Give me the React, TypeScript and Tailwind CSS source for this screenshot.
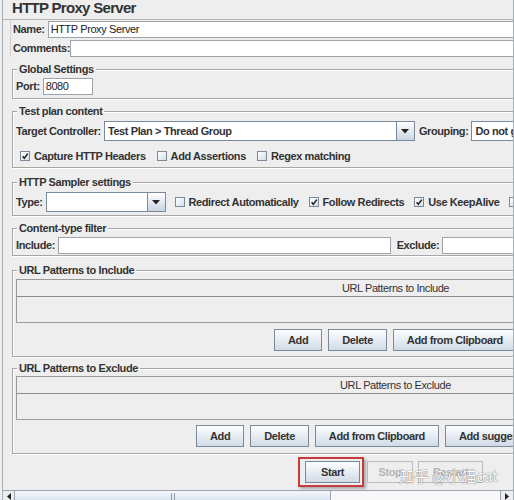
import React from "react";

const FONT = "font-['Liberation_Sans','Noto_Sans_CJK_SC',sans-serif]";

function Label({ children, className = "" }: { children: React.ReactNode; className?: string }) {
  return (
    <span className={`text-[11px] font-bold tracking-[-0.4px] leading-[13px] text-[#333333] whitespace-nowrap ${className}`}>
      {children}
    </span>
  );
}

function Field({ children, className = "" }: { children?: React.ReactNode; className?: string }) {
  return (
    <div
      className={`h-[17px] bg-white border border-[#9ea3a9] pl-[2px] text-[11px] tracking-[-0.4px] leading-[15px] text-[#222222] whitespace-nowrap overflow-hidden ${className}`}
    >
      {children}
    </div>
  );
}

function Combo({ text = "", className = "" }: { text?: string; className?: string }) {
  return (
    <div className={`flex h-[20px] border border-[#7a8a99] bg-white shrink-0 ${className}`}>
      <div className="flex-1 pl-[3px] text-[11px] font-bold tracking-[-0.4px] leading-[18px] text-[#333333] whitespace-nowrap overflow-hidden">
        {text}
      </div>
      <div className="w-[18px] h-full border-l border-[#7a8a99] bg-linear-to-b from-[#ffffff] to-[#c9d5e2] flex items-center justify-center">
        <svg width="8" height="5" viewBox="0 0 8 5">
          <path d="M0 0H8L4 4.5Z" fill="#222222" />
        </svg>
      </div>
    </div>
  );
}

function Check({ checked = false, label }: { checked?: boolean; label: string }) {
  return (
    <div className="flex items-center gap-[4px] shrink-0">
      <div className="w-[10px] h-[10px] border border-[#7a8a99] bg-linear-to-br from-[#ffffff] to-[#d3dde8] flex items-center justify-center">
        {checked && (
          <svg width="8" height="8" viewBox="0 0 8 8">
            <path d="M1.6 4.2L3.3 6.3L6.8 1.6" stroke="#222222" strokeWidth="1.5" fill="none" />
          </svg>
        )}
      </div>
      <Label>{label}</Label>
    </div>
  );
}

function Btn({ children, disabled = false, className = "" }: { children: React.ReactNode; disabled?: boolean; className?: string }) {
  const look = disabled
    ? "border-[#b9bec4] bg-[#eeeeee] text-[#b4b4b4]"
    : "border-[#7a8a99] bg-linear-to-b from-[#fdfeff] to-[#d0dbe7] text-[#333333]";
  return (
    <div
      className={`h-[22px] px-[13px] border ${look} text-[11px] font-bold tracking-[-0.4px] leading-[20px] flex items-center justify-center whitespace-nowrap shrink-0 ${className}`}
    >
      {children}
    </div>
  );
}

function Group({ title, className = "", children }: { title: string; className?: string; children: React.ReactNode }) {
  return (
    <div className={`mx-[9px] border border-[#a6a6a6] shadow-[inset_1px_1px_0_#ffffff,1px_1px_0_#ffffff] px-[3px] ${className}`}>
      <span className="-mt-[7px] ml-[1px] px-[2px] block w-fit bg-[#eeeeee] text-[11px] font-bold tracking-[-0.4px] leading-[13px] text-[#333333] whitespace-nowrap">
        {title}
      </span>
      {children}
    </div>
  );
}

function Table({ title, className = "" }: { title: string; className?: string }) {
  return (
    <div className={`border border-[#9a9a9a] bg-[#eeeeee] ${className}`}>
      <div className="h-[17px] border-b border-[#8c8c8c] text-center text-[11px] tracking-[-0.4px] leading-[16px] text-[#333333]">
        {title}
      </div>
      <div className="h-[25px]" />
    </div>
  );
}

export default function App() {
  return (
    <div className={`${FONT} relative w-[514px] h-[500px] bg-[#eeeeee] overflow-hidden`}>
      <div className="ml-[2px] w-[512px] h-[500px] border-x border-[#a9b0b8] flex flex-col">
        <div className="h-[490px] overflow-hidden">
          <div className="w-[785px]">
            {/* Title */}
            <div className="h-[20px] border-b border-[#b4b4b4] pl-[9px] text-[15px] font-bold tracking-[-0.7px] leading-[15px] text-[#333333]">
              HTTP Proxy Server
            </div>

            {/* Name / Comments */}
            <div className="ml-[7px] border-l border-[#d2d2d2] pl-[2px] pt-[1px]">
              <div className="flex items-center h-[17px]">
                <Label>Name:</Label>
                <Field className="ml-[3px] flex-1">HTTP Proxy Server</Field>
              </div>
              <div className="flex items-center h-[17px] mt-[2px]">
                <Label>Comments:</Label>
                <Field className="flex-1" />
              </div>
            </div>

            {/* Global Settings */}
            <Group title="Global Settings" className="mt-[12px] pb-[3px]">
              <div className="flex items-center h-[17px] mt-[2px]">
                <Label>Port:</Label>
                <Field className="ml-[3px] w-[50px]">8080</Field>
              </div>
            </Group>

            {/* Test plan content */}
            <Group title="Test plan content" className="mt-[12px] pb-[2px]">
              <div className="flex items-center h-[20px] mt-[3px]">
                <Label>Target Controller:</Label>
                <Combo className="ml-[3px] w-[311px]" text="Test Plan > Thread Group" />
                <Label className="ml-[4px]">Grouping:</Label>
                <Combo className="ml-[3px] w-[200px]" text="Do not group samplers" />
              </div>
              <div className="flex items-center h-[18px] mt-[6px] pl-[4px] gap-[11px]">
                <Check checked label="Capture HTTP Headers" />
                <Check label="Add Assertions" />
                <Check label="Regex matching" />
              </div>
            </Group>

            {/* HTTP Sampler settings */}
            <Group title="HTTP Sampler settings" className="mt-[14px] pb-[3px]">
              <div className="flex items-center h-[20px] mt-[3px]">
                <Label>Type:</Label>
                <Combo className="ml-[3px] w-[120px]" />
                <div className="flex items-center ml-[9px] gap-[10px]">
                  <Check label="Redirect Automatically" />
                  <Check checked label="Follow Redirects" />
                  <Check checked label="Use KeepAlive" />
                  <Check label="Retrieve All Embedded Resources" />
                </div>
              </div>
            </Group>

            {/* Content-type filter */}
            <Group title="Content-type filter" className="mt-[12px] pb-[1px]">
              <div className="flex items-center h-[17px] mt-[2px]">
                <Label>Include:</Label>
                <Field className="ml-[3px] flex-1" />
                <Label className="ml-[6px]">Exclude:</Label>
                <Field className="ml-[3px] flex-1" />
              </div>
            </Group>

            {/* URL Patterns to Include */}
            <Group title="URL Patterns to Include" className="mt-[14px] pb-[5px]">
              <Table title="URL Patterns to Include" className="mt-[2px]" />
              <div className="flex justify-center gap-[6px] mt-[6px]">
                <Btn>Add</Btn>
                <Btn>Delete</Btn>
                <Btn>Add from Clipboard</Btn>
              </div>
            </Group>

            {/* URL Patterns to Exclude */}
            <Group title="URL Patterns to Exclude" className="mt-[11px] pb-[6px]">
              <Table title="URL Patterns to Exclude" className="mt-[1px]" />
              <div className="flex justify-center gap-[6px] mt-[5px]">
                <Btn>Add</Btn>
                <Btn>Delete</Btn>
                <Btn>Add from Clipboard</Btn>
                <Btn>Add suggested Excludes</Btn>
              </div>
            </Group>

            {/* Start / Stop / Restart */}
            <div className="flex items-center mt-[3px] pl-[295px]">
              <div className="border-2 border-[#c73a3e] pl-[5px] pr-[2px] py-[2px] shadow-[2px_2px_3px_rgba(0,0,0,0.3)]">
                <Btn className="w-[55px]">Start</Btn>
              </div>
              <Btn disabled className="ml-[3px] w-[46px] px-0">Stop</Btn>
              <Btn disabled className="ml-[5px] w-[65px] px-0">Restart</Btn>
            </div>
          </div>
        </div>

        {/* Horizontal scrollbar */}
        <div className="h-[10px] border-t border-[#9aa4b0] flex bg-[#f8f8f8]">
          <div className="w-[12px] bg-[#eeeeee] border-r border-[#9aa4b0] flex justify-center pt-[2px]">
            <svg width="4" height="7" viewBox="0 0 4 7">
              <path d="M4 0V7L0 3.5Z" fill="#222222" />
            </svg>
          </div>
          <div className="w-[316px] bg-linear-to-b from-[#f5f8fc] to-[#dbe5ef] border-r border-[#9aa4b0] flex justify-center pt-[2px]">
            <div className="w-[4px] h-[7px] border-x border-[#8d9cab]" />
          </div>
          <div className="flex-1" />
          <div className="w-[13px] bg-[#eeeeee] border-l border-[#9aa4b0] flex justify-center pt-[2px]">
            <svg width="4" height="7" viewBox="0 0 4 7">
              <path d="M0 0V7L4 3.5Z" fill="#222222" />
            </svg>
          </div>
        </div>
      </div>

      {/* Watermark */}
      <div className="absolute left-[399px] top-[466px] text-[15px] leading-[20px] text-white opacity-90 whitespace-nowrap font-['Noto_Sans_CJK_SC',sans-serif] [text-shadow:0_0_1px_#666666,0_0_1px_#666666]">
        知乎 @小猫cat
      </div>
    </div>
  );
}
